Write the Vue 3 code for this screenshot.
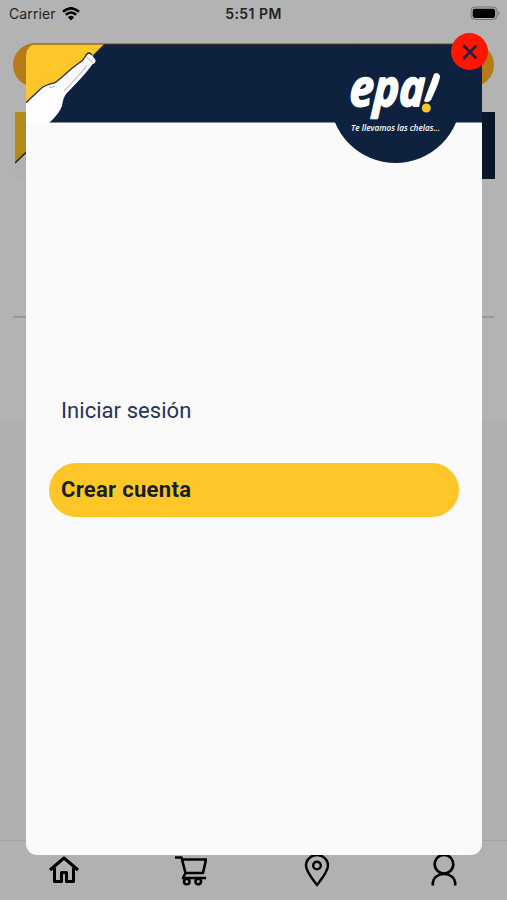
<template>
    <div class="screen">
        <header class="status">
            <div class="carrier">
                <span>Carrier</span>
                <svg width="18" height="14" viewBox="0 0 18 14">
                    <path d="M1 4.8Q9 -2.2 17 4.8" class="wave" />
                    <path d="M3.8 7.8Q9 3.2 14.2 7.8" class="wave" />
                    <path d="M5.9 10.2Q9 7.3 12.1 10.2L9 13.4Z" />
                </svg>
            </div>
            <span class="time">5:51 PM</span>
            <div class="battery">
                <svg width="31" height="15" viewBox="0 0 31 15">
                    <rect x="1" y="1" width="26" height="12.5" rx="3.8" class="shell" />
                    <rect x="2.7" y="2.7" width="22.4" height="9.2" rx="2" />
                    <path d="M28.5 5Q31 7.2 28.5 9.5Z" class="tip" />
                </svg>
            </div>
        </header>
        <main class="home">
            <div class="search"></div>
            <div class="banner">
                <svg width="40" height="67" viewBox="0 0 40 67">
                    <path d="M0 0H40V12L0 51Z" fill="#b2891b" />
                    <path d="M0 51.5L40 13V67H0Z" fill="#b1b1b1" />
                    <path d="M0 51L40 12.5" stroke="#222" stroke-width="1.3" />
                </svg>
            </div>
            <div class="divider"></div>
        </main>
        <nav class="tabs">
            <div v-for="tab in tabs" :key="tab.name" class="tab" @click="current = tab.name">
                <svg width="34" height="34" viewBox="0 0 34 34">
                    <path v-for="d in tab.paths" :key="d" :d="d" :stroke-width="tab.stroke" />
                </svg>
            </div>
        </nav>

        <div v-if="open" class="modal">
            <svg class="head" width="456" height="120" viewBox="0 0 456 120">
                <path d="M0 0H456V78.5H0Z" fill="#0e213f" />
                <circle cx="369.5" cy="53.5" r="65.5" fill="#0e213f" />
                <path d="M0 0H79L22 58L0 72Z" fill="#ffc629" />
                <path d="M79 0L65 14" class="outline" />
                <path
                    d="M0 58.7L15 44.5Q19 41 29 38.7Q33 36 46 24.3L57 16Q59 13 60 11Q63 7 66 11L69.5 16Q70 19 66.7 20Q61 28 51 38.5L40 50Q37 54 36 62Q33 70 23 79H0Z"
                    fill="#fdfdff"
                />
                <path d="M0 58.7L15 44.5Q19 41 29 38.7Q33 36 46 24.3L57 16Q59 13 60 11Q63 7 66 11" class="outline" />
                <path d="M60 12.5L67 19M61 21Q54 31 38 47M23 43Q26 44 29 42" class="shade" />
                <path d="M0 0H456" stroke="#4b4034" stroke-width="1" />
                <text class="logo" transform="translate(323 61.5) skewX(-3)" textLength="75" lengthAdjust="spacingAndGlyphs">epa</text>
                <path d="M408 30Q412 27 414 32Q414 37 405 56Q401 60 398 57Z" fill="#fff" />
                <circle cx="400.3" cy="64" r="5.4" fill="#0e213f" />
                <circle cx="400.3" cy="64" r="4.5" fill="#ffc629" />
                <text class="slogan" x="325" y="86.5" textLength="89" lengthAdjust="spacingAndGlyphs">Te llevamos las chelas...</text>
            </svg>
            <div class="actions">
                <div class="action">Iniciar sesión</div>
                <div class="action primary">Crear cuenta</div>
            </div>
            <div class="close" @click="open = false">
                <svg width="16" height="16" viewBox="0 0 16 16">
                    <path d="M1.5 1.5L14.5 14.5M14.5 1.5L1.5 14.5" />
                </svg>
            </div>
        </div>
    </div>
</template>

<script setup>
import { ref } from 'vue';

const open = ref(true);
const current = ref('home');

const tabs = [
    {
        name: 'home',
        stroke: 3,
        paths: ['M4 17L18 5L32 17', 'M8.5 14.5V28.5H15.5V19.5H20.5V28.5H27.5V14.5']
    },
    {
        name: 'cart',
        stroke: 2.6,
        paths: [
            'M2 4.5H8.5L12.5 20L10 25H33',
            'M9.5 6.5H33L30 20H12.5',
            'M11 28.5a2.8 2.8 0 1 0 5.6 0a2.8 2.8 0 1 0-5.6 0',
            'M22.5 28.5a2.8 2.8 0 1 0 5.6 0a2.8 2.8 0 1 0-5.6 0'
        ]
    },
    {
        name: 'map',
        stroke: 2.4,
        paths: [
            'M17 32C15 29 6 19 6 12.5A11 10.5 0 0 1 28 12.5C28 19 19 29 17 32Z',
            'M13.2 12.5a3.8 3.8 0 1 0 7.6 0a3.8 3.8 0 1 0-7.6 0'
        ]
    },
    {
        name: 'user',
        stroke: 2.6,
        paths: [
            'M7.7 11.2a9.3 9.3 0 1 0 18.6 0a9.3 9.3 0 1 0-18.6 0',
            'M5.8 32.5V31C5.8 17.5 28.2 17.5 28.2 31V32.5'
        ]
    }
];
</script>

<style>
body {
    margin: 0;
}
</style>

<style scoped>
.screen {
    position: relative;
    display: flex;
    flex-direction: column;
    width: 507px;
    height: 900px;
    overflow: hidden;
    background: linear-gradient(#b3b3b3 0, #b3b3b3 420px, #afafaf 421px, #afafaf 100%);
    font-family: Roboto, "Liberation Sans", sans-serif;
}
.status {
    display: flex;
    align-items: center;
    justify-content: space-between;
    height: 27px;
    padding: 0 6px 0 9px;
    font-family: Inter, "Liberation Sans", sans-serif;
    font-size: 14px;
    color: #222;
}
.carrier,
.battery {
    display: flex;
    flex: 1;
    align-items: center;
    gap: 6px;
}
.carrier {
    letter-spacing: 0.1px;
}
.battery {
    justify-content: flex-end;
}
.time {
    margin-right: 3px;
    font-size: 14px;
    font-weight: 600;
    letter-spacing: 0.45px;
}
.wave {
    fill: none;
    stroke: #000;
    stroke-width: 2.6;
}
.shell {
    fill: none;
    stroke: #737373;
}
.tip {
    fill: #737373;
}
.home {
    flex: 1;
    padding: 16px 13px 0;
}
.search {
    height: 44px;
    border-radius: 22px;
    background: #b67b19;
}
.banner {
    height: 67px;
    margin: 25px -1px 0 2px;
    background: #09172c;
}
.banner svg {
    display: block;
}
.divider {
    height: 2px;
    margin-top: 137px;
    background: #999;
}
.tabs {
    display: flex;
    height: 59px;
    border-top: 1px solid #a4a4a4;
    background: #b1b1b1;
}
.tab {
    flex: 1;
    display: flex;
    justify-content: center;
    padding-top: 12px;
}
.tab svg {
    fill: none;
    stroke: #000;
    stroke-linejoin: round;
}
.modal {
    position: absolute;
    top: 44px;
    left: 26px;
    width: 456px;
    height: 811px;
    border-radius: 11px;
    background: #fafafa;
}
.head {
    display: block;
    border-radius: 11px 0 0 0;
}
.outline {
    fill: none;
    stroke: #27303a;
    stroke-width: 1.3;
}
.shade {
    fill: none;
    stroke: #a5aac0;
    stroke-width: 1;
}
.logo {
    fill: #fff;
    stroke: #fff;
    stroke-width: 1.8;
    stroke-linejoin: round;
    font-family: "Open Sans", sans-serif;
    font-size: 51px;
    font-weight: 700;
    font-style: italic;
}
.slogan {
    fill: #fff;
    font-family: "Open Sans", sans-serif;
    font-size: 9px;
    font-weight: 600;
    font-style: italic;
}
.actions {
    display: flex;
    flex-direction: column;
    gap: 25px;
    padding: 220px 23px 0;
}
.action {
    height: 54px;
    padding-left: 12px;
    border-radius: 27px;
    font-size: 22px;
    line-height: 54px;
    letter-spacing: 0.05px;
    color: #25345a;
}
.primary {
    background: #ffc629;
    font-weight: 700;
    letter-spacing: 0.3px;
    color: #151f26;
}
.close {
    position: absolute;
    top: -11px;
    right: -6px;
    display: flex;
    align-items: center;
    justify-content: center;
    width: 37px;
    height: 37px;
    border-radius: 50%;
    background: #ff1500;
    cursor: pointer;
}
.close path {
    stroke: #24213d;
    stroke-width: 2.5;
}
</style>
